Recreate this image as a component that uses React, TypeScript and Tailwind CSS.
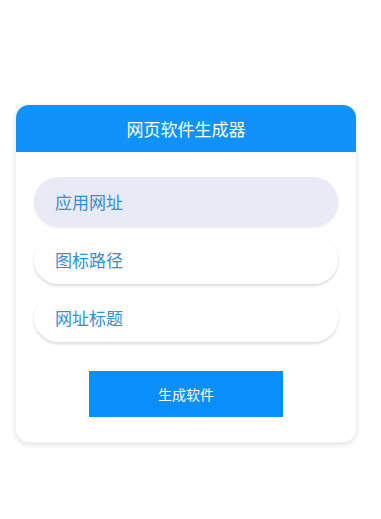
import React from 'react';

const fields = ['应用网址', '图标路径', '网址标题'];

function App() {
  return (
    <div className="min-h-screen bg-white pt-[104px] px-[15px]" style={{ fontFamily: '"Noto Sans CJK SC", "Noto Sans", sans-serif' }}>
      <div className="w-[342px] rounded-[14px] bg-white border border-gray-100 shadow-[0_2px_5px_rgba(0,0,0,0.1)] overflow-hidden">
        {/* Header */}
        <div className="h-[47px] bg-[#1092fb] flex items-center justify-center text-white text-[17px]">
          网页软件生成器
        </div>

        <div className="px-[18px] pt-[25px] pb-[25px] flex flex-col gap-[9px]">
          {fields.map((f, i) => (
            <div
              key={f}
              className={
                i === 0
                  ? 'h-[49px] rounded-full bg-[#e8eaf6] flex items-center pl-[21px] text-[17px] text-[#3390d8] shadow-[0_2px_3px_rgba(0,0,0,0.08)]'
                  : 'h-[49px] rounded-full bg-white flex items-center pl-[21px] text-[17px] text-[#3390d8] shadow-[0_2px_3px_rgba(0,0,0,0.14)]'
              }
            >
              {f}
            </div>
          ))}

          <div className="flex justify-center mt-[20px]">
            <button className="w-[194px] h-[46px] bg-[#0a8ffa] text-white text-[14px]">
              生成软件
            </button>
          </div>
        </div>
      </div>
    </div>
  );
}

export default App;
